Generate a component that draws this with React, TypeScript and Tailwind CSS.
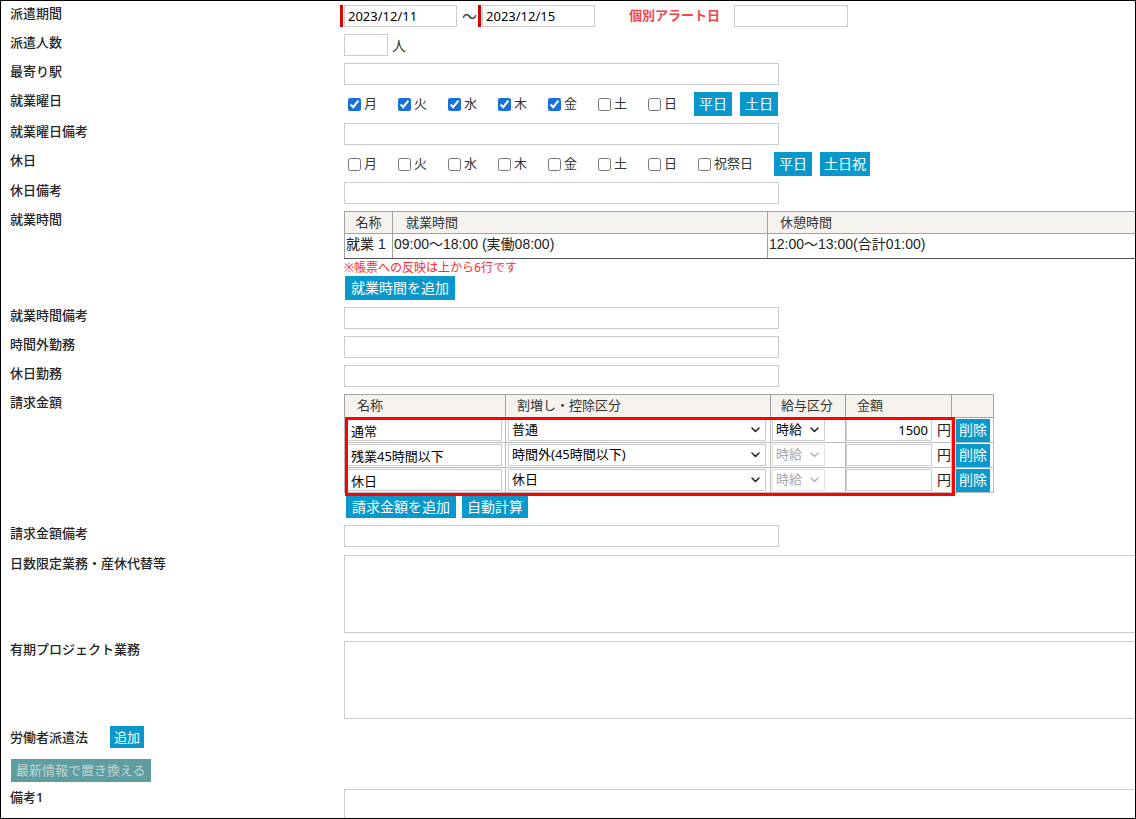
import React from "react";

const DAYS = ["月", "火", "水", "木", "金", "土", "日"];

function Row({
  label,
  children,
  className = "",
}: {
  label: React.ReactNode;
  children?: React.ReactNode;
  className?: string;
}) {
  return (
    <div className={`flex ${className}`}>
      <div className="w-[343px] shrink-0 pl-[9px] leading-[17px] font-medium text-[#262626]">{label}</div>
      <div className="flex-1 min-w-0">{children}</div>
    </div>
  );
}

function TextBox({ className = "", value = "", align = "left" }: { className?: string; value?: string; align?: "left" | "right" }) {
  return (
    <input
      readOnly
      value={value}
      className={`block h-[22px] border border-[#ccc] bg-white px-[3px] text-[13px] text-black outline-none ${
        align === "right" ? "text-right" : "text-left"
      } ${className}`}
    />
  );
}

function Btn({ children, className = "" }: { children: React.ReactNode; className?: string }) {
  return (
    <span
      className={`inline-flex shrink-0 items-center justify-center bg-[#0898cc] text-white leading-none whitespace-nowrap ${className}`}
    >
      {children}
    </span>
  );
}

function Chevron({ color }: { color: string }) {
  return (
    <svg width="9" height="6" viewBox="0 0 9 6" fill="none" className="shrink-0">
      <path d="M1 1l3.5 3.5L8 1" stroke={color} strokeWidth="1.5" strokeLinecap="round" strokeLinejoin="round" />
    </svg>
  );
}

function Select({ text, className = "", disabled = false }: { text: string; className?: string; disabled?: boolean }) {
  return (
    <div
      className={`flex h-[22px] items-center justify-between border bg-white pl-[3px] pr-[5px] text-[13px] ${
        disabled ? "border-[#e2e2e2] text-[#a8a8a8]" : "border-[#ccc] text-black"
      } ${className}`}
    >
      <span className="whitespace-nowrap">{text}</span>
      <Chevron color={disabled ? "#b5b5b5" : "#222"} />
    </div>
  );
}

function DayCheck({ label, checked, className = "w-[50px]" }: { label: string; checked: boolean; className?: string }) {
  return (
    <label className={`flex shrink-0 items-center ${className}`}>
      <input
        type="checkbox"
        defaultChecked={checked}
        className="m-0 ml-[4px] mr-[3px] h-[13px] w-[13px] accent-[#1a6fd8]"
      />
      <span className="text-[13px] text-[#333]">{label}</span>
    </label>
  );
}

const billRows = [
  { name: "通常", kind: "普通", amount: "1500", payDisabled: false },
  { name: "残業45時間以下", kind: "時間外(45時間以下)", amount: "", payDisabled: true },
  { name: "休日", kind: "休日", amount: "", payDisabled: true },
];

export default function App() {
  return (
    <div className="h-[819px] w-[1136px] overflow-hidden border border-black bg-white text-[13px] text-[#333] font-['Noto_Sans','Noto_Sans_CJK_JP',sans-serif]">
      <div className="flex flex-col gap-[7px] pt-[4px]">
        {/* 派遣期間 */}
        <Row label="派遣期間">
          <div className="flex items-center">
            <span className="-ml-[4px] mr-[1px] h-[22px] w-[3px] bg-[#d00000]" />
            <TextBox value="2023/12/11" className="w-[113px]" />
            <span className="ml-[5px] text-[15px] leading-none text-[#333]">〜</span>
            <span className="ml-[1px] mr-[1px] h-[22px] w-[3px] bg-[#d00000]" />
            <TextBox value="2023/12/15" className="w-[113px]" />
            <span className="ml-[34px] text-[13px] font-bold text-[#f24444]">個別アラート日</span>
            <TextBox className="ml-[14px] w-[114px]" />
          </div>
        </Row>

        <Row label="派遣人数">
          <div className="flex items-center">
            <TextBox className="w-[44px]" />
            <span className="ml-[4px] text-[14px]">人</span>
          </div>
        </Row>

        <Row label="最寄り駅">
          <TextBox className="w-[435px]" />
        </Row>

        <Row label="就業曜日">
          <div className="flex h-[24px] items-center">
            {DAYS.map((d, i) => (
              <DayCheck key={d} label={d} checked={i < 5} />
            ))}
            <Btn className="h-[24px] px-[5px] text-[14px]">平日</Btn>
            <Btn className="ml-[8px] h-[24px] px-[5px] text-[14px]">土日</Btn>
          </div>
        </Row>

        <Row label="就業曜日備考">
          <TextBox className="w-[435px]" />
        </Row>

        <Row label="休日">
          <div className="flex h-[24px] items-center">
            {DAYS.map((d) => (
              <DayCheck key={d} label={d} checked={false} />
            ))}
            <DayCheck label="祝祭日" checked={false} className="w-[80px]" />
            <Btn className="h-[24px] px-[5px] text-[14px]">平日</Btn>
            <Btn className="ml-[8px] h-[24px] px-[4px] text-[14px]">土日祝</Btn>
          </div>
        </Row>

        <Row label="休日備考" className="-mt-[1px]">
          <TextBox className="w-[435px]" />
        </Row>

        {/* 就業時間 */}
        <Row label="就業時間">
          <table className="w-[800px] table-fixed border-collapse">
            <colgroup>
              <col className="w-[48px]" />
              <col className="w-[375px]" />
              <col />
            </colgroup>
            <thead>
              <tr className="h-[22px] bg-[#f6f3ee]">
                <th className="border border-[#a3a3a3] text-center text-[13px] font-normal text-[#333]">名称</th>
                <th className="border border-[#a3a3a3] pl-[13px] text-left text-[13px] font-normal text-[#333]">就業時間</th>
                <th className="border border-[#a3a3a3] pl-[12px] text-left text-[13px] font-normal text-[#333]">休憩時間</th>
              </tr>
            </thead>
            <tbody>
              <tr className="h-[25px] align-top font-['Liberation_Sans','Noto_Sans_CJK_JP',sans-serif] text-[14px] text-[#222]">
                <td className="border border-[#a3a3a3] border-b-[#555] pl-[1px] pt-[1px] leading-[18px] whitespace-nowrap">就業 1</td>
                <td className="border border-[#a3a3a3] border-b-[#555] pl-[1px] pt-[1px] leading-[18px] whitespace-nowrap">09:00〜18:00 (実働08:00)</td>
                <td className="border border-[#a3a3a3] border-b-[#555] pl-[1px] pt-[1px] leading-[18px] whitespace-nowrap">12:00〜13:00(合計01:00)</td>
              </tr>
            </tbody>
          </table>
          <div className="mt-[1px] text-[12px] leading-[15px] text-[#ff2a2a]">※帳票への反映は上から6行です</div>
          <Btn className="ml-[1px] mt-[1px] h-[24px] px-[6px] text-[14px]">就業時間を追加</Btn>
        </Row>

        <Row label="就業時間備考">
          <TextBox className="w-[435px]" />
        </Row>

        <Row label="時間外勤務">
          <TextBox className="w-[435px]" />
        </Row>

        <Row label="休日勤務">
          <TextBox className="w-[435px]" />
        </Row>

        {/* 請求金額 */}
        <Row label="請求金額">
          <div className="relative w-[649px]">
            <table className="w-[649px] table-fixed border-collapse">
              <colgroup>
                <col className="w-[161px]" />
                <col className="w-[265px]" />
                <col className="w-[75px]" />
                <col className="w-[106px]" />
                <col className="w-[42px]" />
              </colgroup>
              <thead>
                <tr className="bg-[#f6f3ee]">
                  <th className="h-[23px] border border-[#a3a3a3] pl-[12px] text-left text-[13px] font-normal text-[#333]">名称</th>
                  <th className="h-[23px] border border-[#a3a3a3] pl-[11px] text-left text-[13px] font-normal text-[#333]">割増し・控除区分</th>
                  <th className="h-[23px] border border-[#a3a3a3] pl-[10px] text-left text-[13px] font-normal text-[#333]">給与区分</th>
                  <th className="h-[23px] border border-[#a3a3a3] pl-[11px] text-left text-[13px] font-normal text-[#333]">金額</th>
                  <th className="h-[23px] border border-[#a3a3a3]" />
                </tr>
              </thead>
              <tbody>
                {billRows.map((r) => (
                  <tr key={r.name}>
                    <td className="h-[25px] border border-[#bbb] px-[2px]">
                      <TextBox value={r.name} className="w-[155px] px-[1px]" />
                    </td>
                    <td className="h-[25px] border border-[#bbb] px-[2px]">
                      <Select text={r.kind} className="w-[258px]" />
                    </td>
                    <td className="h-[25px] border border-[#bbb] px-[1px]">
                      <Select text="時給" className="w-[53px]" disabled={r.payDisabled} />
                    </td>
                    <td className="h-[25px] border border-[#bbb] px-0">
                      <div className="flex items-center">
                        <TextBox value={r.amount} align="right" className="w-[86px]" />
                        <span className="ml-[5px] text-[14px] leading-none text-[#222]">円</span>
                      </div>
                    </td>
                    <td className="h-[25px] border border-[#bbb] pl-[4px]">
                      <Btn className="h-[23px] px-[3px] text-[14px]">削除</Btn>
                    </td>
                  </tr>
                ))}
              </tbody>
            </table>
            <div className="pointer-events-none absolute left-[1px] top-[23px] h-[79px] w-[610px] border-[3px] border-[#f00]" />
          </div>
          <div className="mt-[3px] flex gap-[6px] pl-[2px]">
            <Btn className="h-[22px] px-[6px] text-[14px]">請求金額を追加</Btn>
            <Btn className="h-[22px] px-[5px] text-[14px]">自動計算</Btn>
          </div>
        </Row>

        <Row label="請求金額備考">
          <TextBox className="w-[435px]" />
        </Row>

        <Row label="日数限定業務・産休代替等" className="mt-[1px]">
          <textarea readOnly className="block h-[78px] w-[800px] resize-none border border-[#ccc] outline-none" />
        </Row>

        <Row label="有期プロジェクト業務" className="mt-[1px]">
          <textarea readOnly className="block h-[78px] w-[800px] resize-none border border-[#ccc] outline-none" />
        </Row>

        {/* 労働者派遣法 */}
        <div className="flex items-center pl-[9px]">
          <span className="leading-[17px] font-medium text-[#262626]">労働者派遣法</span>
          <Btn className="ml-[22px] h-[22px] px-[4px] text-[13px]">追加</Btn>
        </div>

        <div className="mt-[4px] pl-[10px]">
          <span className="inline-flex h-[23px] items-center bg-[#5f9ea0] px-[5px] text-[13px] leading-none text-[#c3d3d3]">
            最新情報で置き換える
          </span>
        </div>

        <Row label="備考1">
          <textarea readOnly className="block h-[78px] w-[800px] resize-none border border-[#ccc] outline-none" />
        </Row>
      </div>
    </div>
  );
}
